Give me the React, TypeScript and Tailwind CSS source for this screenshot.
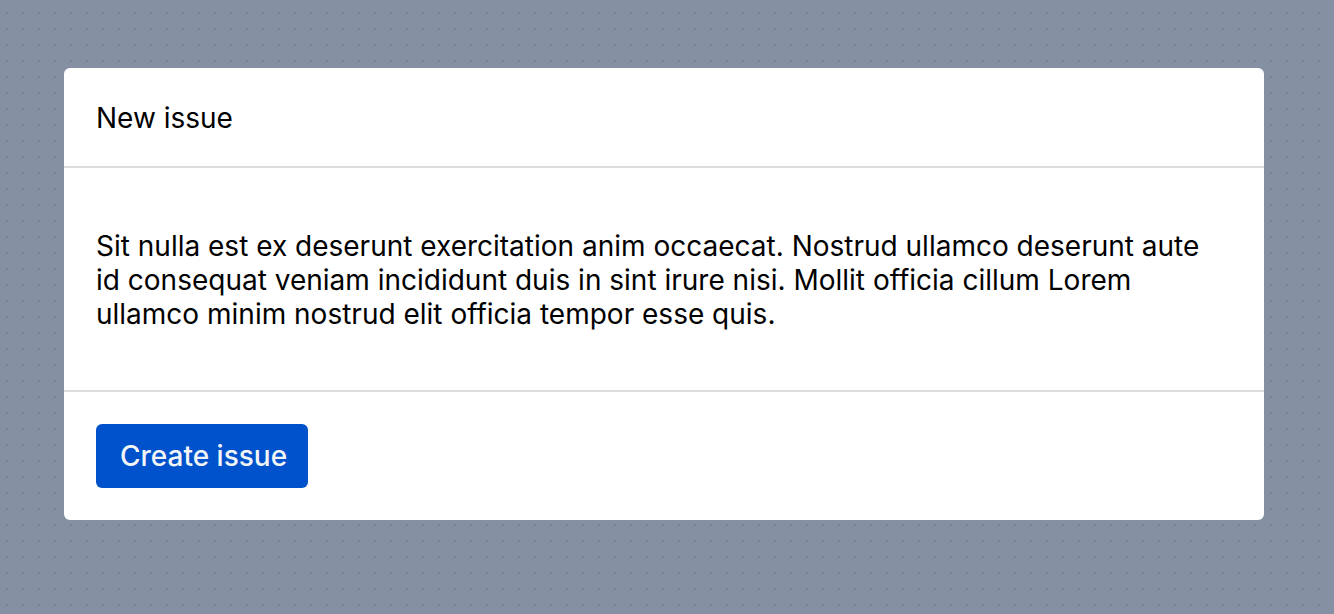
import React from "react";

export default function App() {
  return (
    <div className="min-h-screen bg-[#8590a2] bg-[conic-gradient(from_90deg_at_14px_14px,#758195_90deg,transparent_0)] bg-[length:16px_16px] bg-[position:-8px_-2px] pt-[68px] pr-[70px] pb-[94px] pl-16 font-['Inter',sans-serif] text-black">
      <section aria-labelledby="dialog-title" className="overflow-hidden rounded-md bg-white text-[28px] leading-[34px]">
        <header className="border-b-2 border-[#dcdcdc] px-8 pt-[33px] pb-[31px]">
          <h1 id="dialog-title" className="font-normal">New issue</h1>
        </header>
        <div className="border-b-2 border-[#dcdcdc] pt-[61px] pr-14 pb-[59px] pl-8">
          <p>
            Sit nulla est ex deserunt exercitation anim occaecat. Nostrud ullamco deserunt aute id consequat veniam incididunt duis in sint irure nisi. Mollit officia cillum Lorem ullamco minim nostrud elit officia tempor esse quis.
          </p>
        </div>
        <footer className="p-8">
          <button type="button" className="flex h-16 items-center rounded-md bg-[#0052cc] pr-[21px] pl-6 font-medium text-[#f4f5f7]">
            Create issue
          </button>
        </footer>
      </section>
    </div>
  );
}
